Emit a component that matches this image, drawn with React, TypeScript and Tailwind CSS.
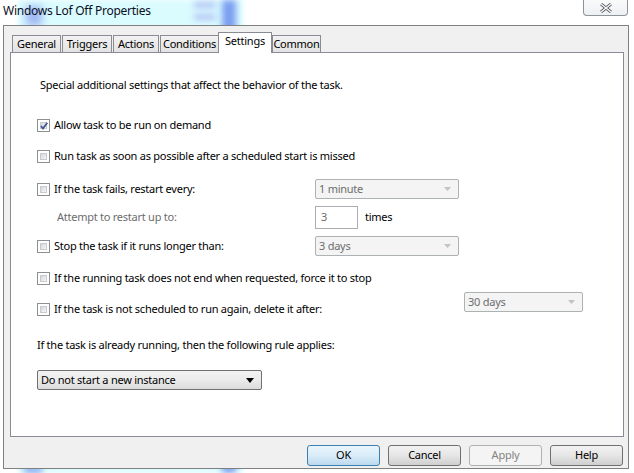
import React from 'react';

const font = { fontFamily: '"Noto Sans", "Open Sans", sans-serif' };

function Checkbox({ checked = false }: { checked?: boolean }) {
  return (
    <span className="relative flex h-[13px] w-[13px] shrink-0 border border-[#8e8f8f] bg-white p-[2px]">
      <span className="block h-full w-full border border-[#c7cbd1] bg-linear-to-br from-[#d4d6da] to-[#f7f7f7]" />
      {checked && (
        <svg className="absolute left-[1px] top-[1px]" width="10" height="10" viewBox="0 0 10 10">
          <path d="M2 5 L4 7.6 L8.3 1.8" fill="none" stroke="#3e5592" strokeWidth="1.8" />
        </svg>
      )}
    </span>
  );
}

function Option({ label, checked }: { label: string; checked?: boolean }) {
  return (
    <div className="flex items-center gap-[4px]">
      <Checkbox checked={checked} />
      <span>{label}</span>
    </div>
  );
}

function Combo({ value, width }: { value: string; width: string }) {
  return (
    <div className={`flex h-[20px] items-center justify-between rounded-[2px] border border-[#adb2b5] bg-[#f4f4f4] pl-[3px] pr-[7px] text-[#6d6d6d] ${width}`}>
      <span>{value}</span>
      <svg width="7" height="4" viewBox="0 0 7 4">
        <path d="M0 0 H7 L3.5 4 Z" fill="#c3c3c3" />
      </svg>
    </div>
  );
}

function Btn({ label, kind }: { label: string; kind?: 'default' | 'disabled' }) {
  const cls =
    kind === 'default'
      ? 'border-[#3c7fb1] from-[#eaf5fc] via-[#d9ecf8] to-[#bcd9ee] text-black'
      : kind === 'disabled'
        ? 'border-[#adb2b5] from-[#f4f4f4] to-[#f4f4f4] text-[#838383]'
        : 'border-[#707070] from-[#f2f2f2] via-[#e6e6e6] to-[#cfcfcf] text-black';
  return (
    <div className={`flex h-[21px] w-[73px] items-center justify-center rounded-[3px] border bg-linear-to-b ${cls}`}>
      {label}
    </div>
  );
}

const tabs = ['General', 'Triggers', 'Actions', 'Conditions', 'Settings', 'Common'];
const tabW: Record<string, string> = {
  General: 'w-[49px]',
  Triggers: 'w-[50px]',
  Actions: 'w-[46px]',
  Conditions: 'w-[59px]',
  Settings: 'w-[54px]',
  Common: 'w-[49px]',
};

export default function App() {
  return (
    <div className="relative h-[473px] w-[634px] overflow-hidden bg-white text-[11px] tracking-[-0.25px] text-black" style={font}>
      {/* glass behind the window */}
      <div className="absolute left-[18px] top-0 h-full w-[225px] bg-[#dafcff] blur-[2px]" />
      <div className="absolute left-[26px] top-[6px] h-[20px] w-[16px] bg-[#9fb6f2] blur-[4px]" />
      <div className="absolute left-[194px] top-[2px] h-[6px] w-[22px] bg-[#b4c2f4] blur-[3px]" />
      <div className="absolute left-[194px] top-[14px] h-[6px] w-[22px] bg-[#b4c2f4] blur-[3px]" />
      <div className="absolute left-[222px] top-0 h-full w-[14px] bg-[#7d9ff0] blur-[3px]" />
      <div className="absolute bottom-0 left-[24px] h-[6px] w-[18px] bg-[#7d9ff0] blur-[3px]" />

      <div className="relative flex h-[25px] items-start justify-between">
        <div className="pl-[3px] pt-[2px] text-[12px] text-[#0a0f1e]">Windows Lof Off Properties</div>
        <div className="mr-[6px] flex h-[16px] w-[45px] items-center justify-center rounded-b-[4px] border border-t-0 border-[#8d939b] bg-linear-to-b from-[#fafafa] to-[#eef0f3]">
          <svg width="12" height="10" viewBox="0 0 12 10">
            <path d="M1 1 L11 9 M11 1 L1 9" stroke="#5a5f66" strokeWidth="3" />
            <path d="M1 1 L11 9 M11 1 L1 9" stroke="#ffffff" strokeWidth="1.2" />
          </svg>
        </div>
      </div>

      <div className="relative ml-[3px] flex h-[444px] w-[626px] flex-col border border-[#808080] bg-[#f0f0f0] pl-[6px] pr-[4px]">
        <div className="mt-[6px] flex h-[20px] items-end pl-[1px]">
          {tabs.map((t) => {
            const sel = t === 'Settings';
            return (
              <div
                key={t}
                className={`flex items-center justify-center border border-b-0 border-[#898c95] ${tabW[t]} ${
                  sel
                    ? 'relative z-10 -mx-[1px] -mb-[1px] h-[21px] bg-white pb-[3px]'
                    : 'ml-[1px] h-[17px] bg-linear-to-b from-[#f2f2f2] to-[#e3e3e3]'
                }`}
              >
                {t}
              </div>
            );
          })}
        </div>

        <div className="flex h-[385px] flex-col border border-[#898c95] bg-white pl-[26px]">
          <div className="ml-[3px] mt-[22px] flex h-[20px] items-center">
            Special additional settings that affect the behavior of the task.
          </div>
          <div className="mt-[20px] flex h-[20px] items-center">
            <Option label="Allow task to be run on demand" checked />
          </div>
          <div className="mt-[11px] flex h-[20px] items-center">
            <Option label="Run task as soon as possible after a scheduled start is missed" />
          </div>
          <div className="mt-[13px] flex h-[20px] items-center">
            <div className="w-[278px]">
              <Option label="If the task fails, restart every:" />
            </div>
            <Combo value="1 minute" width="w-[144px]" />
          </div>
          <div className="mt-[7px] flex h-[23px] items-center">
            <div className="w-[278px] pl-[20px] text-[#6d6d6d]">Attempt to restart up to:</div>
            <div className="flex h-[23px] w-[43px] items-start border border-[#abadb3] pl-[5px] pt-[2px] text-[#6d6d6d]">3</div>
            <span className="ml-[7px]">times</span>
          </div>
          <div className="mt-[7px] flex h-[20px] items-center">
            <div className="w-[278px]">
              <Option label="Stop the task if it runs longer than:" />
            </div>
            <Combo value="3 days" width="w-[144px]" />
          </div>
          <div className="mt-[12px] flex h-[20px] items-center">
            <Option label="If the running task does not end when requested, force it to stop" />
          </div>
          <div className="mt-[4px] flex h-[27px]">
            <div className="flex w-[427px] items-end">
              <div className="flex h-[20px] items-center">
                <Option label="If the task is not scheduled to run again, delete it after:" />
              </div>
            </div>
            <Combo value="30 days" width="w-[119px]" />
          </div>
          <div className="mt-[16px] flex h-[20px] items-center">
            If the task is already running, then the following rule applies:
          </div>
          <div className="mt-[15px] flex h-[20px] w-[225px] items-center justify-between rounded-[2px] border border-[#707070] bg-linear-to-b from-[#f2f2f2] via-[#ebebeb] to-[#dcdcdc] pl-[3px] pr-[7px]">
            <span>Do not start a new instance</span>
            <svg width="8" height="5" viewBox="0 0 8 5">
              <path d="M0 0 H8 L4 5 Z" fill="#000000" />
            </svg>
          </div>
        </div>

        <div className="mt-[8px] flex justify-end gap-[8px] pr-[1px]">
          <Btn label="OK" kind="default" />
          <Btn label="Cancel" />
          <Btn label="Apply" kind="disabled" />
          <Btn label="Help" />
        </div>
      </div>
    </div>
  );
}
